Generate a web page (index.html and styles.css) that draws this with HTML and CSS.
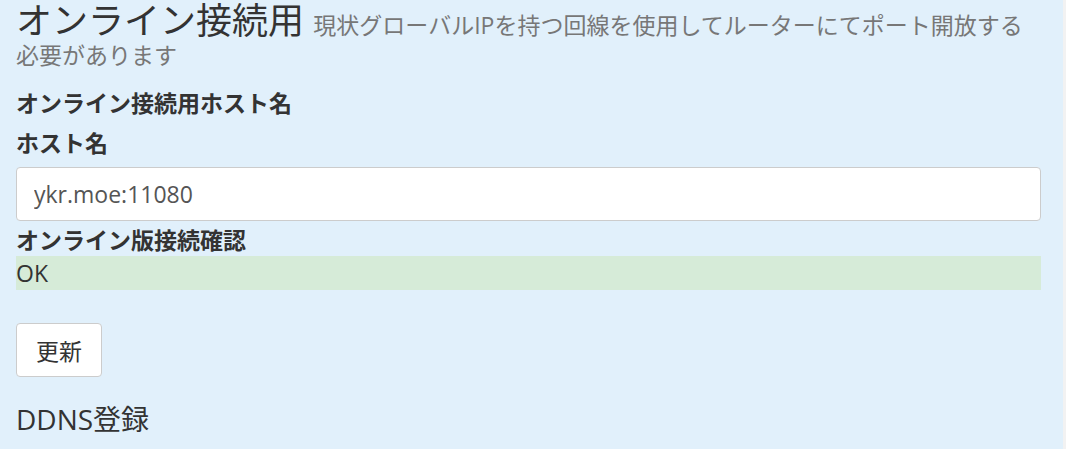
FILE: index.html
```html
<!DOCTYPE html>
<html lang="ja">
<head>
    <meta charset="UTF-8">
    <title>オンライン接続用</title>
    <link rel="stylesheet" href="styles.css">
</head>
<body>
    <div class="panel">
        <h1>オンライン接続用 <small>現状グローバルIPを持つ回線を使用してルーターにてポート開放する必要があります</small></h1>
        <h4>オンライン接続用ホスト名</h4>
        <form class="host-form">
            <label for="host">ホスト名</label>
            <input type="text" id="host" value="ykr.moe:11080">
            <div class="status-label">オンライン版接続確認</div>
            <div class="status-ok">OK</div>
            <button type="button" class="btn">更新</button>
        </form>
        <h3>DDNS登録</h3>
    </div>
</body>
</html>
```

FILE: styles.css
```css
body {
    margin: 0;
    background-color: #f2f2f2;
    font-family: "Open Sans", "Noto Sans CJK JP", sans-serif;
    color: #333;
    font-size: 23px;
}
.panel {
    width: 1063px;
    height: 449px;
    box-sizing: border-box;
    padding: 7px 22px 0 16px;
    background-color: #e1f0fb;
    overflow: hidden;
}
h1 {
    margin: 0;
    font-size: 36px;
    font-weight: 400;
    line-height: 27px;
}
h1 small {
    font-size: 23px;
    color: #777;
    line-height: 1;
}
h4 {
    margin: 20px 0 0;
    font-size: 23px;
    font-weight: 700;
    line-height: 32px;
}
label {
    display: block;
    margin-top: 8px;
    font-weight: 700;
    line-height: 32px;
}
input[type="text"] {
    display: block;
    width: 100%;
    height: 54px;
    margin-top: 8px;
    padding: 0 17px;
    box-sizing: border-box;
    border: 1px solid #ccc;
    border-radius: 4px;
    background-color: #fff;
    font: inherit;
    color: #555;
}
.status-label {
    margin-top: 3px;
    font-weight: 700;
    line-height: 32px;
}
.status-ok {
    height: 34px;
    line-height: 34px;
    background-color: #d6ebd8;
}
.btn {
    display: block;
    margin-top: 33px;
    width: 86px;
    height: 54px;
    background-color: #fff;
    border: 1px solid #ccc;
    border-radius: 4px;
    font: inherit;
    color: #333;
}
h3 {
    margin: 27px 0 0;
    font-size: 28px;
    font-weight: 400;
    line-height: 1.1;
}
```
